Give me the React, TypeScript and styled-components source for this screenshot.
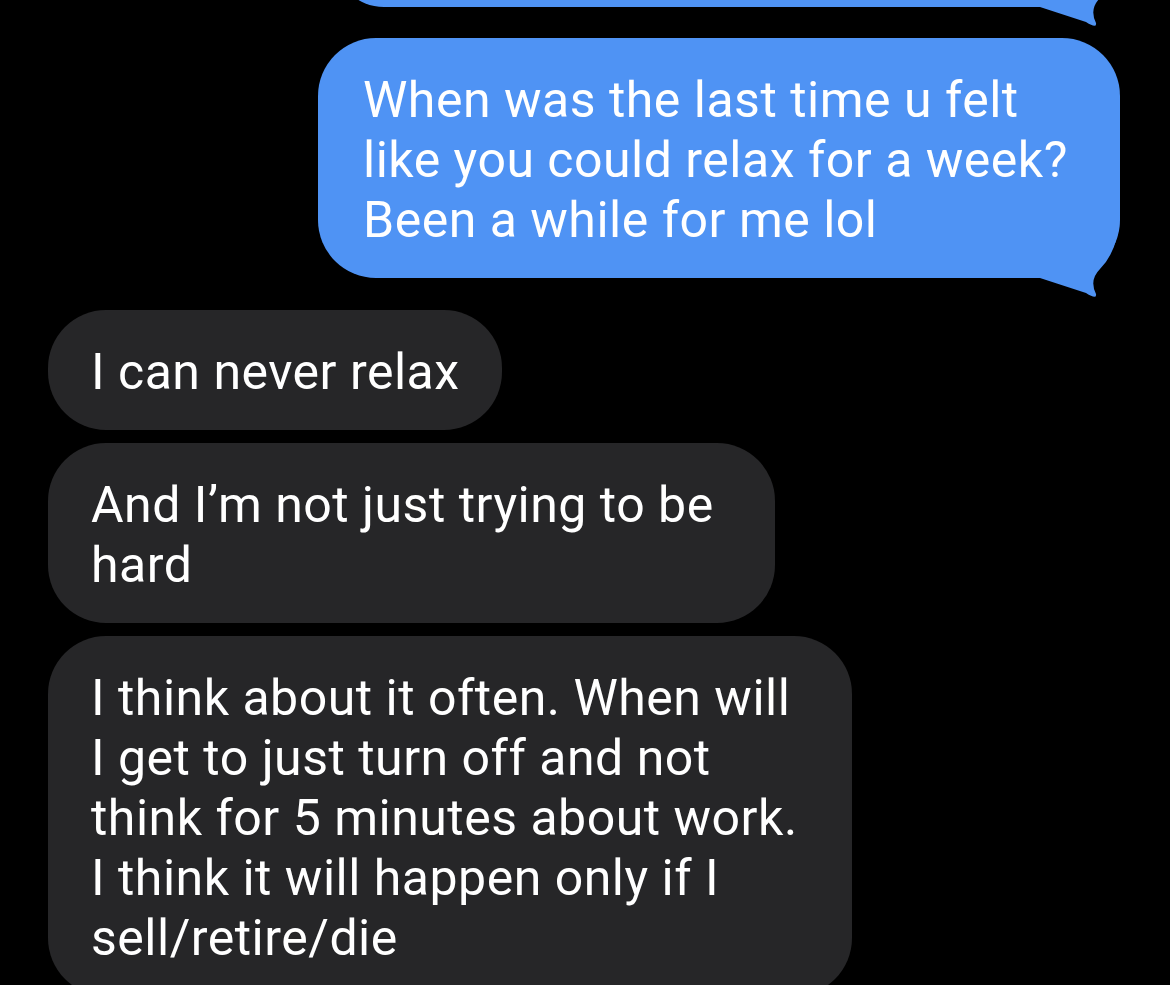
import React from "react";
import styled, { createGlobalStyle } from "styled-components";

const Global = createGlobalStyle`
  html, body {
    margin: 0;
    padding: 0;
    background: #000;
    overflow: hidden;
  }
  body {
    font-family: Roboto, "Liberation Sans", Arial, sans-serif;
  }
`;

const Screen = styled.div`
  width: 1170px;
  height: 985px;
  background: #000;
  overflow: hidden;
`;

const Thread = styled.div`
  display: flex;
  flex-direction: column;
  padding: 0 50px 0 48px;
  margin-top: -93px;
`;

const Bubble = styled.div<{ $out?: boolean; $w: number; $gap: number; $h?: number }>`
  position: relative;
  box-sizing: border-box;
  align-self: ${(p) => (p.$out ? "flex-end" : "flex-start")};
  width: ${(p) => p.$w}px;
  ${(p) => (p.$h ? `height: ${p.$h}px;` : "")}
  margin-top: ${(p) => p.$gap}px;
  padding: 32px 20px 28px ${(p) => (p.$out ? 45 : 43)}px;
  border-radius: 58px;
  background: ${(p) => (p.$out ? "#4f93f4" : "#262628")};
  color: #fff;
  font-size: 50px;
  line-height: 60px;
  letter-spacing: 0.5px;
  white-space: nowrap;
`;

const Line = styled.div``;

const TailSvg = styled.svg`
  position: absolute;
  right: 0;
  bottom: -22px;
  width: 80px;
  height: 100px;
  display: block;
`;

function Tail({ color }: { color: string }) {
  return (
    <TailSvg viewBox="0 0 80 100">
      <path
        d="M0,78 L46,93 Q57,100 56,94 Q49,80 60,69 Q79,50 80,12 L80,0 L0,0 Z"
        fill={color}
      />
    </TailSvg>
  );
}

type Msg = { out?: boolean; w: number; gap: number; h?: number; lines: string[] };

const messages: Msg[] = [
  { out: true, w: 786, gap: 0, h: 100, lines: [] },
  {
    out: true,
    w: 802,
    gap: 31,
    lines: [
      "When was the last time u felt",
      "like you could relax for a week?",
      "Been a while for me lol",
    ],
  },
  { w: 454, gap: 32, lines: ["I can never relax"] },
  { w: 727, gap: 13, lines: ["And I\u2019m not just trying to be", "hard"] },
  {
    w: 804,
    gap: 13,
    lines: [
      "I think about it often. When will",
      "I get to just turn off and not",
      "think for 5 minutes about work.",
      "I think it will happen only if I",
      "sell/retire/die",
    ],
  },
];

export default function App() {
  return (
    <Screen>
      <Global />
      <Thread>
        {messages.map((m, i) => (
          <Bubble key={i} $out={m.out} $w={m.w} $gap={m.gap} $h={m.h}>
            {m.lines.map((l, j) => (
              <Line key={j}>{l}</Line>
            ))}
            {m.out && <Tail color="#4f93f4" />}
          </Bubble>
        ))}
      </Thread>
    </Screen>
  );
}
